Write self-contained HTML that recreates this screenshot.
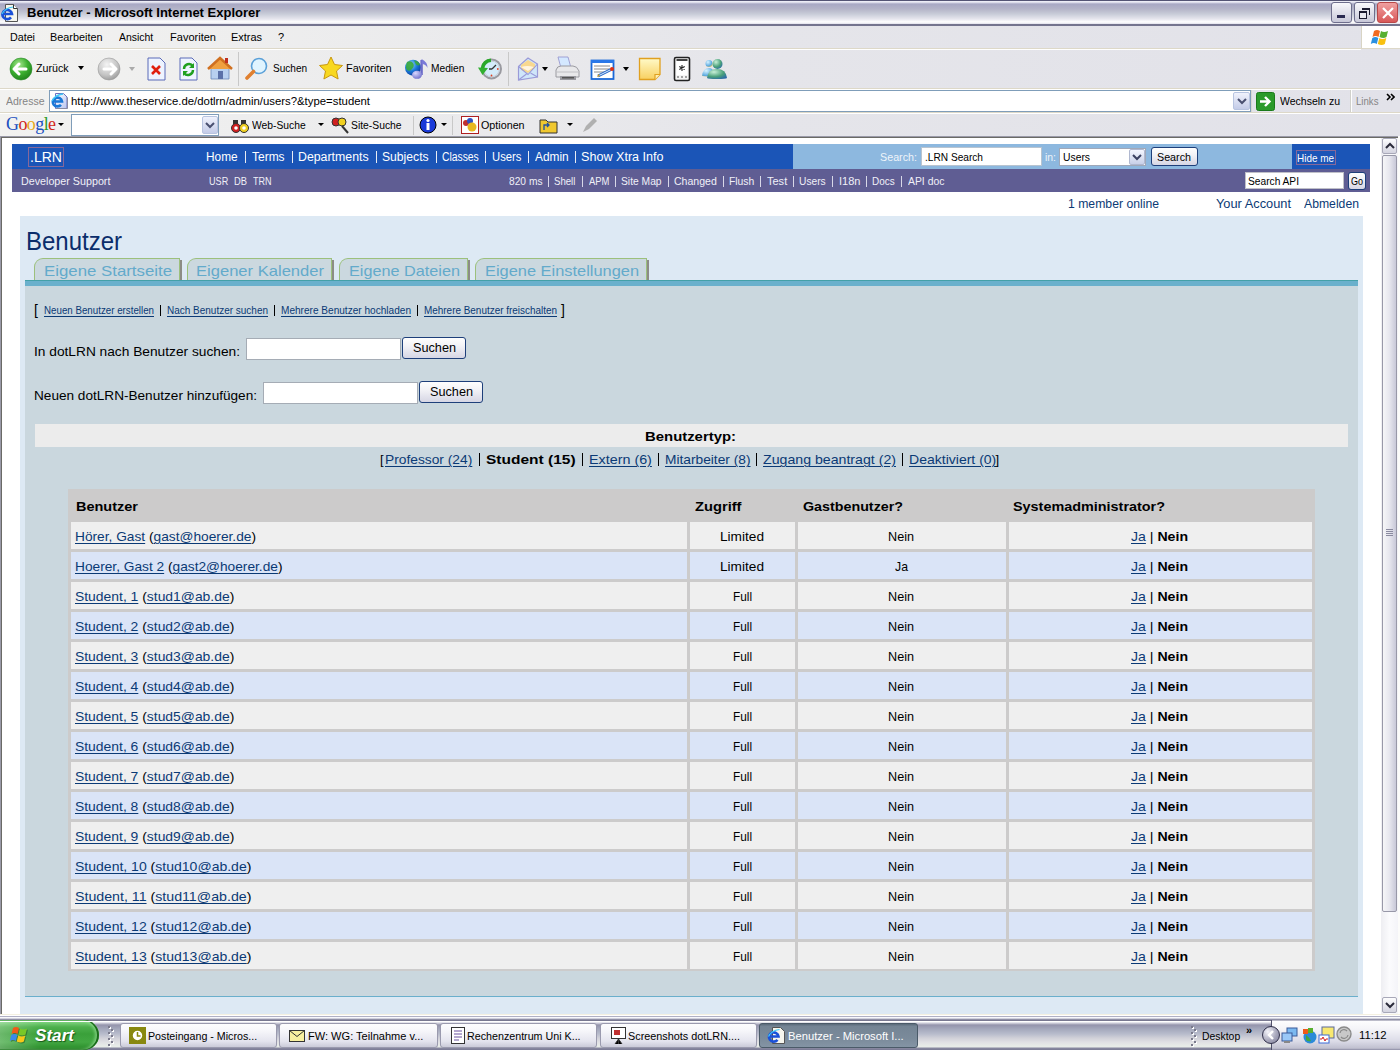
<!DOCTYPE html>
<html><head><meta charset="utf-8">
<style>
*{margin:0;padding:0;box-sizing:border-box}
html,body{width:1400px;height:1050px;overflow:hidden;background:#fff;font-family:"Liberation Sans",sans-serif;font-size:12px;color:#000}
.a{position:absolute;white-space:nowrap}
#title{left:0;top:0;width:1400px;height:26px;background:linear-gradient(#545474 0,#545474 1px,#ececf6 1px,#ececf6 2px,#a8a8c4 4px,#b4b4c8 9px,#c8ccd8 14px,#e6e6ee 19px,#fff 22px,#e8e8f0 23.5px,#74748e 24.5px,#74748e 26px)}
#menu{left:0;top:26px;width:1400px;height:23px;background:linear-gradient(90deg,#f2f2f0,#e5e5ea 55%,#e2e2e9);border-bottom:1px solid #ddd8c8;box-shadow:0 1px 0 #fff}
#tool{left:0;top:49px;width:1400px;height:40px;background:linear-gradient(90deg,#f2f2f0,#e5e5ea 55%,#e2e2e9);border-bottom:1px solid #ddd8c8;box-shadow:0 1px 0 #fff}
#addr{left:0;top:89px;width:1400px;height:24px;background:linear-gradient(90deg,#f2f2f0,#e5e5ea 55%,#e2e2e9);border-bottom:1px solid #ddd8c8;box-shadow:0 1px 0 #fff}
#goog{left:0;top:113px;width:1400px;height:24px;background:linear-gradient(90deg,#f2f2f0,#e5e5ea 55%,#e2e2e9)}
#page{left:0;top:136px;width:1400px;height:880px;background:#fff;border-top:2px solid #7a7a78;border-left:2px solid #7a7a78}
#task{left:0;top:1016px;width:1400px;height:34px;background:linear-gradient(#fff 0,#fff 1px,#a8a8c0 1px,#a8a8c0 2px,#fff 2px,#f8f8fa 4px,#e4e4ec 8px,#d2d2de 20px,#c0c0d0 30px,#a4a4b8 34px)}
.btn3{top:2px;width:21px;height:21px;border-radius:3px;border:1px solid #6e6e8c}
.mi{top:31px;font-size:11px;color:#000}
.tt{font-size:12px;color:#000}
</style></head><body>
<div id="title" class="a"></div>
<svg class="a" style="left:1px;top:3px" width="20" height="19"><path d="M4.5 1.5h8l4 4v13h-12z" fill="#f6f6ee" stroke="#555" stroke-width="1"/><path d="M12.5 1.5v4h4" fill="#fff" stroke="#333" stroke-width="1"/><path d="M2.5 11h8.5A4.8 4.6 0 1 0 10 14.4" stroke="#1a50d8" stroke-width="2.6" fill="none"/><path d="M1 11q3-6 11-7" stroke="#40c8f8" stroke-width="1.2" fill="none"/></svg>
<div class="a" style="left:27px;top:5px;font-size:13px;font-weight:bold;color:#000;">Benutzer - Microsoft Internet Explorer</div>
<div class="a btn3" style="left:1331px;background:linear-gradient(#f8f8fc,#c8c8d8)"><div class="a" style="left:5px;top:12px;width:8px;height:3px;background:#2a2a50"></div></div>
<div class="a btn3" style="left:1354px;background:linear-gradient(#f8f8fc,#c8c8d8)"><div class="a" style="left:4px;top:8px;width:8px;height:8px;border:1px solid #1a1a30;border-top-width:2px;background:#e8e8f0"></div><div class="a" style="left:7px;top:5px;width:8px;height:7px;border-top:2px solid #1a1a30;border-right:1px solid #1a1a30"></div></div>
<div class="a btn3" style="left:1377px;background:linear-gradient(#f0a0a0,#d85858);border-color:#b84848">
<svg class="a" style="left:3px;top:3px" width="14" height="14"><path d="M2 2L12 12M12 2L2 12" stroke="#fff" stroke-width="2.2"/></svg></div>

<div id="menu" class="a"></div>
<div class="a" style="left:1361px;top:26px;width:39px;height:22px;background:#fff;border-left:1px solid #d8d4c4"></div>
<svg class="a" style="left:1370px;top:27px" width="22" height="20"><path d="M4 4q3-2 6 0l-1.5 6q-3-2-6 0z" fill="#f06a20"/><path d="M11 4q3 2 7 0l-1.5 6q-3 2-7 0z" fill="#58b030"/><path d="M2.3 11q3-2 6 0l-1.5 6q-3-2-6 0z" fill="#2a90e0"/><path d="M9.3 11q3 2 7 0l-1.5 6q-3 2-7 0z" fill="#f8c010"/></svg>

<div id="tool" class="a"></div>
<svg class="a" style="left:9px;top:57px" width="24" height="24"><defs><radialGradient id="gb" cx=".4" cy=".3" r=".8"><stop offset="0" stop-color="#a8e890"/><stop offset=".5" stop-color="#3cb030"/><stop offset="1" stop-color="#1a7a18"/></radialGradient><radialGradient id="gg" cx=".4" cy=".3" r=".8"><stop offset="0" stop-color="#f4f4f4"/><stop offset=".6" stop-color="#c4c4c4"/><stop offset="1" stop-color="#909090"/></radialGradient></defs><circle cx="12" cy="12" r="11" fill="url(#gb)" stroke="#2a8a28" stroke-width=".6"/><path d="M5 12h12M5 12l5-5M5 12l5 5" stroke="#fff" stroke-width="3" fill="none" stroke-linecap="round" stroke-linejoin="round"/></svg>
<svg class="a" style="left:78px;top:66px" width="8" height="5"><path d="M0 0h6l-3 4z" fill="#000"/></svg>
<svg class="a" style="left:97px;top:57px" width="24" height="24"><circle cx="12" cy="12" r="11" fill="url(#gg)" stroke="#999" stroke-width=".6"/><path d="M19 12H7M19 12l-5-5M19 12l-5 5" stroke="#fff" stroke-width="3" fill="none" stroke-linecap="round" stroke-linejoin="round"/></svg>
<svg class="a" style="left:129px;top:67px" width="8" height="5"><path d="M0 0h6l-3 4z" fill="#aaa"/></svg>
<svg class="a" style="left:146px;top:57px" width="22" height="24"><path d="M2 1h12l5 5v17H2z" fill="#eef4ff" stroke="#5a6ab8" stroke-width="1"/><path d="M6 9l8 8M14 9l-8 8" stroke="#e02010" stroke-width="2.6"/></svg>
<svg class="a" style="left:178px;top:57px" width="22" height="24"><path d="M2 1h12l5 5v17H2z" fill="#eef4ff" stroke="#5a6ab8" stroke-width="1"/><path d="M6 12a5 5 0 0 1 9-3M15 13a5 5 0 0 1-9 3" stroke="#20a020" stroke-width="2.4" fill="none"/><path d="M16 6v5h-5z M5 19v-5h5z" fill="#20a020"/></svg>
<svg class="a" style="left:207px;top:56px" width="26" height="25"><path d="M4 12L13 3l9 9v11H4z" fill="#b8d0f0" stroke="#6a88b8" stroke-width=".8"/><path d="M1 13L13 2l12 11" fill="#f0a040" stroke="#d07020" stroke-width="2.5"/><rect x="11" y="15" width="5" height="8" fill="#5a70a8"/><rect x="18" y="2" width="3" height="5" fill="#c03020"/></svg>
<div class="a" style="left:238px;top:52px;width:1px;height:34px;background:#c8c8c8"></div>
<svg class="a" style="left:244px;top:56px" width="26" height="26"><circle cx="15" cy="10" r="7.5" fill="#e0f4ff" stroke="#5aa0d8" stroke-width="1.6"/><path d="M9.5 15.5L3 22" stroke="#e08030" stroke-width="3.6" stroke-linecap="round"/></svg>
<svg class="a" style="left:318px;top:56px" width="26" height="26"><path d="M13 1l3.5 7.5 8 1-6 5.5 1.6 8L13 19l-7.1 4 1.6-8-6-5.5 8-1z" fill="#f8d820" stroke="#c89810" stroke-width="1"/></svg>
<svg class="a" style="left:400px;top:56px" width="32" height="26"><defs><radialGradient id="glb" cx=".35" cy=".3" r=".75"><stop offset="0" stop-color="#9ae0ff"/><stop offset=".55" stop-color="#1a78d8"/><stop offset="1" stop-color="#0a3a9a"/></radialGradient><radialGradient id="nte" cx=".35" cy=".3" r=".8"><stop offset="0" stop-color="#d8d8ff"/><stop offset="1" stop-color="#6a6ac8"/></radialGradient></defs><circle cx="13" cy="11.7" r="8" fill="url(#glb)"/><path d="M7 6q4-2 6 1t-1 6q-2 3-5 1-2-3 0-8zM14 4.5q4 0 6 4-2 2-4 0z" fill="#3aa83a" opacity=".9"/><path d="M21.6 4v15" stroke="#6a6ac8" stroke-width="2.4"/><path d="M21.6 3q6 3 6 9-2-4-6-4z" fill="#7a7ad8"/><ellipse cx="17" cy="18.8" rx="5" ry="4" fill="url(#nte)"/></svg>
<svg class="a" style="left:478px;top:56px" width="26" height="26"><circle cx="13.5" cy="12.9" r="9.5" fill="#d4ecfa" stroke="#9a9aa0" stroke-width="2"/><circle cx="13.5" cy="12.9" r="7.8" fill="none" stroke="#c8c8d0" stroke-width=".8"/><path d="M14 13l4-4M14 13h-3" stroke="#333" stroke-width="1.3"/><circle cx="19.8" cy="13" r=".9" fill="#e04020"/><circle cx="13.5" cy="19.5" r=".9" fill="#e04020"/><path d="M13 4.2a9 9 0 0 0-8.5 8" stroke="#2aa82a" stroke-width="3.6" fill="none"/><path d="M0 11.5l4.5 7.5 5.5-7z" fill="#30b030"/></svg>
<div class="a" style="left:508px;top:52px;width:1px;height:34px;background:#c8c8c8"></div>
<svg class="a" style="left:516px;top:56px" width="24" height="26"><path d="M2.5 10.5L12 2l9.5 6v13l-19 3z" fill="#cfe6fa" stroke="#9a9ad8" stroke-width="1.2"/><path d="M5 9l7-5 7 4v4l-7 5-7-3z" fill="#f8d890"/><path d="M5 11q6-2 13 0l-6 4z" fill="#fff4e0"/><path d="M2.5 10.5l9.5 8 9.5-10.5M2.5 24l8-6M21.5 21l-7-4" stroke="#9a9ad8" stroke-width="1.1" fill="none"/></svg>
<svg class="a" style="left:542px;top:67px" width="8" height="5"><path d="M0 0h6l-3 4z" fill="#000"/></svg>
<svg class="a" style="left:555px;top:56px" width="26" height="26"><path d="M3 1h10l3 11H6z" fill="#d4e8ff" stroke="#9a9ad0" stroke-width=".9"/><path d="M1 14q1-4 5-4h12q4 0 6 5v6H1z" fill="#e8e8ea" stroke="#9a9aa0" stroke-width="1"/><path d="M1 16h23" stroke="#c0c0c4"/><rect x="5" y="20" width="16" height="4" fill="#9a9aa0"/><rect x="7" y="21" width="12" height="1.5" fill="#555"/></svg>
<svg class="a" style="left:590px;top:59px" width="26" height="22"><rect x="1.5" y="1.5" width="22" height="18.5" fill="#fff" stroke="#1a68d8" stroke-width="1.8"/><rect x="1" y="1" width="23" height="3" fill="#2a78e8"/><path d="M4 7h16M4 10h16M4 13h12" stroke="#8a8a8a" stroke-width="1"/><path d="M8 17l13-6.5" stroke="#2a68c8" stroke-width="3"/><path d="M8 17l13-6.5" stroke="#d8ecff" stroke-width="1"/><path d="M7 18l1.5-3 1.5 2z" fill="#c89820"/><circle cx="22" cy="10" r="2" fill="#e03010"/></svg>
<svg class="a" style="left:623px;top:67px" width="8" height="5"><path d="M0 0h6l-3 4z" fill="#000"/></svg>
<svg class="a" style="left:638px;top:57px" width="24" height="24"><defs><linearGradient id="ntg" x1="0" y1="0" x2="0" y2="1"><stop offset="0" stop-color="#fffac8"/><stop offset="1" stop-color="#f8d060"/></linearGradient></defs><path d="M1.5 1.5h20.5v16l-5 5H1.5z" fill="url(#ntg)" stroke="#e0a020" stroke-width="1.3"/><path d="M17 22.5v-5h5" fill="#fff0b0" stroke="#e0a020" stroke-width="1.2"/></svg>
<svg class="a" style="left:673px;top:56px" width="18" height="26"><rect x="1.5" y="1.5" width="15" height="23" rx="1.5" fill="#f4f4f4" stroke="#222" stroke-width="1.6"/><rect x="3.5" y="3" width="11" height="2" fill="#444"/><rect x="3.5" y="5" width="11" height="14" fill="#fff"/><path d="M9 9v6M6.3 10.5l5.4 3M11.7 10.5l-5.4 3" stroke="#222" stroke-width="1.1"/><path d="M4 21h2M8 21h2M12 21h2" stroke="#888" stroke-width="1.5"/></svg>
<svg class="a" style="left:700px;top:56px" width="28" height="26"><defs><radialGradient id="msh" cx=".35" cy=".3" r=".8"><stop offset="0" stop-color="#c8f0d8"/><stop offset=".6" stop-color="#4aa07a"/><stop offset="1" stop-color="#2a6aa8"/></radialGradient><radialGradient id="msb" cx=".35" cy=".3" r=".8"><stop offset="0" stop-color="#d8f4ff"/><stop offset=".7" stop-color="#5aa8e0"/><stop offset="1" stop-color="#e0c040"/></radialGradient></defs><circle cx="9" cy="7.5" r="3.5" fill="url(#msb)"/><path d="M2 20q1-8 7-8 4 0 5 5l-3 4z" fill="url(#msb)"/><circle cx="17.5" cy="8" r="5" fill="url(#msh)"/><path d="M7 22q1-9 10-9 9 0 10 9-1 1-10 1t-10-1z" fill="url(#msh)"/></svg>

<div id="addr" class="a"></div>
<div class="a" style="left:49px;top:90px;width:1202px;height:22px;background:#fff;border:1px solid #7f9db9"></div>
<svg class="a" style="left:51px;top:92px" width="18" height="18"><defs><linearGradient id="pgb" x1="0" y1="0" x2="1" y2="1"><stop offset="0" stop-color="#fff"/><stop offset="1" stop-color="#b8c4f0"/></linearGradient></defs><path d="M4.5 1.5h8l3.5 3.5v11.5H4.5z" fill="url(#pgb)" stroke="#6a70c0" stroke-width="1"/><path d="M5 16.5h11.5v-11" stroke="#8a8aa0" stroke-width="1" fill="none"/><path d="M2.5 9.5h8.5A4.6 4.4 0 1 0 10 12.8" stroke="#1a78d8" stroke-width="2.6" fill="none"/><path d="M1 9q3-6 11-7" stroke="#40c8f8" stroke-width="1.3" fill="none"/></svg>
<div class="a" style="left:1233px;top:92px;width:17px;height:18px;background:linear-gradient(#f0f2fc,#c4cce8);border:1px solid #b8c4e0;border-radius:2px"></div>
<svg class="a" style="left:1237px;top:98px" width="10" height="7"><path d="M1 1l4 4 4-4" stroke="#4a5070" stroke-width="2" fill="none"/></svg>
<div class="a" style="left:1251px;top:90px;width:1px;height:22px;background:#d8d8d0"></div>
<svg class="a" style="left:1256px;top:92px" width="19" height="19"><rect x=".5" y=".5" width="18" height="18" rx="2" fill="#2a9a2a" stroke="#1a7a1a"/><path d="M4 9.5h9M9 5l4.5 4.5L9 14" stroke="#fff" stroke-width="2.4" fill="none"/></svg>
<div class="a" style="left:1350px;top:90px;width:2px;height:22px;border-left:1px solid #d0d0cc;border-right:1px solid #fff"></div>

<div id="goog" class="a"></div>
<div class="a" style="left:6px;top:114px;font-family:'Liberation Serif',serif;font-size:18px;letter-spacing:-.6px"><span style="color:#2050c0">G</span><span style="color:#d02818">o</span><span style="color:#e8a818">o</span><span style="color:#2050c0">g</span><span style="color:#2a9a2a">l</span><span style="color:#d02818">e</span></div>
<svg class="a" style="left:58px;top:123px" width="7" height="5"><path d="M0 0h6l-3 3z" fill="#000"/></svg>
<div class="a" style="left:71px;top:114px;width:148px;height:22px;background:#fff;border:1px solid #7f9db9"></div>
<div class="a" style="left:202px;top:116px;width:16px;height:18px;background:linear-gradient(#f0f2fc,#c4cce8);border:1px solid #b8c4e0;border-radius:2px"></div>
<svg class="a" style="left:205px;top:122px" width="10" height="7"><path d="M1 1l4 4 4-4" stroke="#4a5070" stroke-width="2" fill="none"/></svg>
<svg class="a" style="left:230px;top:116px" width="20" height="18"><path d="M3 4h5v4H3zM11 4h5v4h-5z" fill="#333"/><circle cx="6" cy="12" r="4.5" fill="#d02020" stroke="#333"/><circle cx="14" cy="12" r="4.5" fill="#f0d020" stroke="#333"/><circle cx="6" cy="12" r="1.8" fill="#fff"/><circle cx="14" cy="12" r="1.8" fill="#fff"/></svg>
<svg class="a" style="left:318px;top:123px" width="7" height="5"><path d="M0 0h6l-3 3z" fill="#000"/></svg>
<svg class="a" style="left:331px;top:116px" width="19" height="18"><circle cx="5" cy="6" r="4" fill="#d02020" stroke="#333"/><circle cx="11" cy="6" r="4" fill="#f0d020" stroke="#333"/><path d="M11 10l6 7" stroke="#333" stroke-width="2"/></svg>
<div class="a" style="left:413px;top:116px;width:1px;height:19px;background:#c8c8c8"></div>
<svg class="a" style="left:419px;top:116px" width="19" height="18"><circle cx="9" cy="9" r="8" fill="#1a3ad8" stroke="#000" stroke-width="1"/><rect x="7.5" y="7" width="3" height="7" fill="#fff"/><circle cx="9" cy="4.5" r="1.6" fill="#fff"/></svg>
<svg class="a" style="left:441px;top:123px" width="7" height="5"><path d="M0 0h6l-3 3z" fill="#000"/></svg>
<div class="a" style="left:452px;top:116px;width:1px;height:19px;background:#c8c8c8"></div>
<svg class="a" style="left:461px;top:116px" width="18" height="18"><rect x=".5" y=".5" width="17" height="17" fill="#fff" stroke="#b02020"/><circle cx="5" cy="7" r="3" fill="#c03030"/><circle cx="9" cy="5" r="3" fill="#3050c0"/><circle cx="11" cy="11" r="4.5" fill="#e8b820"/></svg>
<svg class="a" style="left:539px;top:117px" width="19" height="17"><path d="M1 3h6l2 2h9v11H1z" fill="#f0c830" stroke="#333" stroke-width="1"/><path d="M5 13V8h5M8 6l2 2-2 2" stroke="#2050a0" stroke-width="1.3" fill="none"/></svg>
<svg class="a" style="left:567px;top:123px" width="7" height="5"><path d="M0 0h6l-3 3z" fill="#000"/></svg>
<svg class="a" style="left:581px;top:117px" width="17" height="17"><path d="M2 15l3-6 8-8 3 3-8 8z" fill="#b0b0b0"/></svg>

<style>
.t{position:absolute;white-space:nowrap;font-family:"Liberation Sans",sans-serif}
.lk{color:#0b3a75;text-decoration:underline;text-decoration-thickness:1px;text-underline-offset:2px}
.xb{position:absolute;border:1px solid #1e3f7a;border-radius:3px;background:linear-gradient(#fefefe,#f2f2f6 40%,#d6d6e4)}
.in{position:absolute;background:#fff;border:1px solid #a5acb5}
</style>
<div class="a" style="left:0px;top:49px;width:1361px;height:1px;background:#fff"></div>
<div class="a" style="left:0px;top:89px;width:1400px;height:1px;background:#fff"></div>
<div class="a" style="left:0px;top:113px;width:1400px;height:1px;background:#fff"></div>
<div class="t" style="left:9.5px;top:31px;font-size:11px;line-height:13px;color:#000;transform:scaleX(0.9732);transform-origin:0 0;">Datei</div>
<div class="t" style="left:50px;top:31px;font-size:11px;line-height:13px;color:#000;transform:scaleX(0.9865);transform-origin:0 0;">Bearbeiten</div>
<div class="t" style="left:118.75px;top:31px;font-size:11px;line-height:13px;color:#000;transform:scaleX(0.9493);transform-origin:0 0;">Ansicht</div>
<div class="t" style="left:169.5px;top:31px;font-size:11px;line-height:13px;color:#000;transform:scaleX(1.0031);transform-origin:0 0;">Favoriten</div>
<div class="t" style="left:231px;top:31px;font-size:11px;line-height:13px;color:#000;transform:scaleX(0.9940);transform-origin:0 0;">Extras</div>
<div class="t" style="left:278px;top:31px;font-size:11px;line-height:13px;color:#000;">?</div>
<div class="t" style="left:36.4px;top:62px;font-size:11px;line-height:13px;color:#000;transform:scaleX(0.9695);transform-origin:0 0;">Zurück</div>
<div class="t" style="left:272.9px;top:62px;font-size:11px;line-height:13px;color:#000;transform:scaleX(0.9139);transform-origin:0 0;">Suchen</div>
<div class="t" style="left:346.4px;top:62px;font-size:11px;line-height:13px;color:#000;transform:scaleX(0.9943);transform-origin:0 0;">Favoriten</div>
<div class="t" style="left:431.4px;top:62px;font-size:11px;line-height:13px;color:#000;transform:scaleX(0.9258);transform-origin:0 0;">Medien</div>
<div class="t" style="left:5.7px;top:95px;font-size:11px;line-height:13px;color:#858585;transform:scaleX(0.9564);transform-origin:0 0;">Adresse</div>
<div class="t" style="left:71px;top:95px;font-size:11px;line-height:13px;color:#000;transform:scaleX(1.0327);transform-origin:0 0;">http://www.theservice.de/dotlrn/admin/users?&amp;type=student</div>
<div class="t" style="left:1279.5px;top:95px;font-size:11px;line-height:13px;color:#000;transform:scaleX(0.9557);transform-origin:0 0;">Wechseln zu</div>
<div class="t" style="left:1355.5px;top:95px;font-size:11px;line-height:13px;color:#858585;transform:scaleX(0.8759);transform-origin:0 0;">Links</div>
<svg class="a" style="left:1386px;top:93px" width="9" height="8"><path d="M1 1l3 3-3 3M5 1l3 3-3 3" stroke="#000" stroke-width="1.6" fill="none"/></svg>
<div class="t" style="left:252px;top:119px;font-size:11px;line-height:13px;color:#000;transform:scaleX(0.9375);transform-origin:0 0;">Web-Suche</div>
<div class="t" style="left:351.4px;top:119px;font-size:11px;line-height:13px;color:#000;transform:scaleX(0.9403);transform-origin:0 0;">Site-Suche</div>
<div class="t" style="left:481.4px;top:119px;font-size:11px;line-height:13px;color:#000;transform:scaleX(0.9763);transform-origin:0 0;">Optionen</div>
<div class="a" style="left:0px;top:136px;width:1400px;height:880px;background:#fff"></div>
<div class="a" style="left:0px;top:136px;width:1400px;height:1px;background:#9a9aa8"></div>
<div class="a" style="left:0px;top:136px;width:1px;height:880px;background:#9a9aa8"></div>
<div class="a" style="left:1px;top:137px;width:1399px;height:1px;background:#6a6a66"></div>
<div class="a" style="left:1px;top:137px;width:1px;height:879px;background:#6a6a66"></div>
<div class="a" style="left:1398px;top:136px;width:2px;height:880px;background:#fcfcfa"></div>
<div class="a" style="left:1381px;top:138px;width:17px;height:877px;background:linear-gradient(90deg,#eeeef2,#fbfbfd 50%,#f4f4f8)"></div>
<div class="a" style="left:1382px;top:138px;width:15px;height:16px;border:1px solid #a8a8b8;border-radius:2px;background:linear-gradient(#fdfdfe,#d4d4e0)"></div>
<svg class="a" style="left:1385px;top:142px" width="10" height="7"><path d="M1 6l4-4 4 4" stroke="#2a2a3a" stroke-width="2" fill="none"/></svg>
<div class="a" style="left:1382px;top:155px;width:15px;height:757px;border:1px solid #9898a8;border-radius:2px;background:linear-gradient(90deg,#f6f6f8,#e6e6ee 50%,#c8c8d8)"></div>
<div class="a" style="left:1386px;top:529px;width:7px;height:8px;background:repeating-linear-gradient(#8a8aa0 0,#8a8aa0 1px,transparent 1px,transparent 2px)"></div>
<div class="a" style="left:1382px;top:997px;width:15px;height:16px;border:1px solid #a8a8b8;border-radius:2px;background:linear-gradient(#fdfdfe,#d4d4e0)"></div>
<svg class="a" style="left:1385px;top:1002px" width="10" height="7"><path d="M1 1l4 4 4-4" stroke="#2a2a3a" stroke-width="2" fill="none"/></svg>
<div class="a" style="left:12px;top:144px;width:1358px;height:25px;background:#1b55b7"></div>
<div class="a" style="left:793px;top:144px;width:499px;height:25px;background:#8db8df"></div>
<div class="a" style="left:12px;top:169px;width:1358px;height:23px;background:#5f5d93"></div>
<div class="a" style="left:28px;top:147px;width:36px;height:20px;border:1px solid #86689a"></div>
<div class="t" style="left:30px;top:148px;font-size:15px;line-height:17px;color:#fff;transform:scaleX(0.9360);transform-origin:0 0;">.LRN</div>
<div class="t" style="left:206.4px;top:150px;font-size:12px;line-height:14px;color:#fff;transform:scaleX(0.9870);transform-origin:0 0;">Home</div>
<div class="t" style="left:252.4px;top:150px;font-size:12px;line-height:14px;color:#fff;transform:scaleX(0.9978);transform-origin:0 0;">Terms</div>
<div class="t" style="left:298.4px;top:150px;font-size:12px;line-height:14px;color:#fff;transform:scaleX(1.0276);transform-origin:0 0;">Departments</div>
<div class="t" style="left:382.4px;top:150px;font-size:12px;line-height:14px;color:#fff;transform:scaleX(1.0124);transform-origin:0 0;">Subjects</div>
<div class="t" style="left:442.3px;top:150px;font-size:12px;line-height:14px;color:#fff;transform:scaleX(0.8621);transform-origin:0 0;">Classes</div>
<div class="t" style="left:492px;top:150px;font-size:12px;line-height:14px;color:#fff;transform:scaleX(0.9380);transform-origin:0 0;">Users</div>
<div class="t" style="left:534.9px;top:150px;font-size:12px;line-height:14px;color:#fff;transform:scaleX(0.9907);transform-origin:0 0;">Admin</div>
<div class="t" style="left:581.4px;top:150px;font-size:12px;line-height:14px;color:#fff;transform:scaleX(1.0493);transform-origin:0 0;">Show Xtra Info</div>
<div class="a" style="left:245px;top:151px;width:1px;height:12px;background:#e8ecf4"></div>
<div class="a" style="left:292px;top:151px;width:1px;height:12px;background:#e8ecf4"></div>
<div class="a" style="left:376px;top:151px;width:1px;height:12px;background:#e8ecf4"></div>
<div class="a" style="left:436px;top:151px;width:1px;height:12px;background:#e8ecf4"></div>
<div class="a" style="left:485px;top:151px;width:1px;height:12px;background:#e8ecf4"></div>
<div class="a" style="left:528px;top:151px;width:1px;height:12px;background:#e8ecf4"></div>
<div class="a" style="left:575px;top:151px;width:1px;height:12px;background:#e8ecf4"></div>
<div class="t" style="left:880px;top:151px;font-size:11px;line-height:13px;color:#eef4fa;transform:scaleX(0.9757);transform-origin:0 0;">Search:</div>
<div class="in" style="left:921px;top:147px;width:121px;height:19px;border-color:#b8c4d0"></div>
<div class="t" style="left:925px;top:151px;font-size:11px;line-height:13px;color:#000;transform:scaleX(0.9209);transform-origin:0 0;">.LRN Search</div>
<div class="t" style="left:1045px;top:151px;font-size:11px;line-height:13px;color:#eef4fa;transform:scaleX(0.9462);transform-origin:0 0;">in:</div>
<div class="in" style="left:1059px;top:148px;width:87px;height:18px;border-color:#a0a8b8"></div>
<div class="t" style="left:1063px;top:151px;font-size:11px;line-height:13px;color:#000;transform:scaleX(0.9396);transform-origin:0 0;">Users</div>
<div class="a" style="left:1129px;top:149px;width:16px;height:16px;border:1px solid #b0b8d0;border-radius:2px;background:linear-gradient(#f4f6fe,#c8d0e8)"></div>
<svg class="a" style="left:1132px;top:154px" width="10" height="7"><path d="M1 1l4 4 4-4" stroke="#3a4060" stroke-width="2" fill="none"/></svg>
<div class="xb" style="left:1151px;top:147px;width:47px;height:19px"></div>
<div class="t" style="left:1157px;top:151px;font-size:11px;line-height:13px;color:#000;transform:scaleX(0.9753);transform-origin:0 0;">Search</div>
<div class="a" style="left:1296px;top:150px;width:40px;height:15px;border:1px solid #86689a"></div>
<div class="t" style="left:1297px;top:152px;font-size:11px;line-height:13px;color:#fff;transform:scaleX(0.9031);transform-origin:0 0;">Hide me</div>
<div class="t" style="left:20.6px;top:175px;font-size:11px;line-height:13px;color:#f0f0f8;transform:scaleX(0.9746);transform-origin:0 0;">Developer Support</div>
<div class="t" style="left:209.4px;top:175px;font-size:11px;line-height:13px;color:#f0f0f8;transform:scaleX(0.8264);transform-origin:0 0;">USR</div>
<div class="t" style="left:234.4px;top:175px;font-size:11px;line-height:13px;color:#f0f0f8;transform:scaleX(0.8507);transform-origin:0 0;">DB</div>
<div class="t" style="left:253.4px;top:175px;font-size:11px;line-height:13px;color:#f0f0f8;transform:scaleX(0.8227);transform-origin:0 0;">TRN</div>
<div class="t" style="left:508.5px;top:175px;font-size:11px;line-height:13px;color:#f0f0f8;transform:scaleX(0.9285);transform-origin:0 0;">820 ms</div>
<div class="t" style="left:554.3px;top:175px;font-size:11px;line-height:13px;color:#f0f0f8;transform:scaleX(0.8746);transform-origin:0 0;">Shell</div>
<div class="t" style="left:588.6px;top:175px;font-size:11px;line-height:13px;color:#f0f0f8;transform:scaleX(0.8556);transform-origin:0 0;">APM</div>
<div class="t" style="left:621.4px;top:175px;font-size:11px;line-height:13px;color:#f0f0f8;transform:scaleX(0.9350);transform-origin:0 0;">Site Map</div>
<div class="t" style="left:674.3px;top:175px;font-size:11px;line-height:13px;color:#f0f0f8;transform:scaleX(0.9584);transform-origin:0 0;">Changed</div>
<div class="t" style="left:729px;top:175px;font-size:11px;line-height:13px;color:#f0f0f8;transform:scaleX(0.9403);transform-origin:0 0;">Flush</div>
<div class="t" style="left:766.9px;top:175px;font-size:11px;line-height:13px;color:#f0f0f8;transform:scaleX(1.0006);transform-origin:0 0;">Test</div>
<div class="t" style="left:799.3px;top:175px;font-size:11px;line-height:13px;color:#f0f0f8;transform:scaleX(0.9292);transform-origin:0 0;">Users</div>
<div class="t" style="left:838.6px;top:175px;font-size:11px;line-height:13px;color:#f0f0f8;transform:scaleX(0.9990);transform-origin:0 0;">I18n</div>
<div class="t" style="left:872.4px;top:175px;font-size:11px;line-height:13px;color:#f0f0f8;transform:scaleX(0.9017);transform-origin:0 0;">Docs</div>
<div class="t" style="left:907.9px;top:175px;font-size:11px;line-height:13px;color:#f0f0f8;transform:scaleX(0.9447);transform-origin:0 0;">API doc</div>
<div class="a" style="left:548px;top:176px;width:1px;height:11px;background:#d8d8e8"></div>
<div class="a" style="left:582px;top:176px;width:1px;height:11px;background:#d8d8e8"></div>
<div class="a" style="left:615px;top:176px;width:1px;height:11px;background:#d8d8e8"></div>
<div class="a" style="left:668px;top:176px;width:1px;height:11px;background:#d8d8e8"></div>
<div class="a" style="left:723px;top:176px;width:1px;height:11px;background:#d8d8e8"></div>
<div class="a" style="left:760px;top:176px;width:1px;height:11px;background:#d8d8e8"></div>
<div class="a" style="left:793px;top:176px;width:1px;height:11px;background:#d8d8e8"></div>
<div class="a" style="left:832px;top:176px;width:1px;height:11px;background:#d8d8e8"></div>
<div class="a" style="left:866px;top:176px;width:1px;height:11px;background:#d8d8e8"></div>
<div class="a" style="left:901px;top:176px;width:1px;height:11px;background:#d8d8e8"></div>
<div class="in" style="left:1245px;top:172px;width:99px;height:17px;border-color:#c0c0c8"></div>
<div class="t" style="left:1248px;top:176px;font-size:10px;line-height:12px;color:#000;transform:scaleX(1.0194);transform-origin:0 0;">Search API</div>
<div class="xb" style="left:1348px;top:172px;width:18px;height:18px;border-radius:3px"></div>
<div class="t" style="left:1351px;top:176px;font-size:10px;line-height:12px;color:#000;transform:scaleX(0.8993);transform-origin:0 0;">Go</div>
<div class="t" style="left:1068px;top:197px;font-size:12px;line-height:14px;color:#0b3a75;transform:scaleX(1.0180);transform-origin:0 0;">1 member online</div>
<div class="t" style="left:1216px;top:197px;font-size:12px;line-height:14px;color:#0b3a75;transform:scaleX(1.0671);transform-origin:0 0;">Your Account</div>
<div class="t" style="left:1304px;top:197px;font-size:12px;line-height:14px;color:#0b3a75;transform:scaleX(1.0176);transform-origin:0 0;">Abmelden</div>
<div class="a" style="left:20px;top:216px;width:1343px;height:799px;background:#dde9f4"></div>
<div class="t" style="left:26px;top:226px;font-size:26px;line-height:30px;color:#0a2d6b;transform:scaleX(0.9224);transform-origin:0 0;">Benutzer</div>
<div class="a" style="left:34px;top:258px;width:146px;height:22px;background:#cbd8df;border:1px solid #9cc07c;border-bottom:none;border-top-left-radius:9px"></div>
<div class="a" style="left:180px;top:260px;width:2px;height:22px;background:#8c8c86"></div>
<div class="t" style="left:44px;top:262px;font-size:15px;line-height:17px;color:#63aacb;transform:scaleX(1.1204);transform-origin:0 0;">Eigene Startseite</div>
<div class="a" style="left:187px;top:258px;width:145px;height:22px;background:#cbd8df;border:1px solid #9cc07c;border-bottom:none;border-top-left-radius:9px"></div>
<div class="a" style="left:332px;top:260px;width:2px;height:22px;background:#8c8c86"></div>
<div class="t" style="left:196px;top:262px;font-size:15px;line-height:17px;color:#63aacb;transform:scaleX(1.1042);transform-origin:0 0;">Eigener Kalender</div>
<div class="a" style="left:339px;top:258px;width:129px;height:22px;background:#cbd8df;border:1px solid #9cc07c;border-bottom:none;border-top-left-radius:9px"></div>
<div class="a" style="left:468px;top:260px;width:2px;height:22px;background:#8c8c86"></div>
<div class="t" style="left:349px;top:262px;font-size:15px;line-height:17px;color:#63aacb;transform:scaleX(1.0821);transform-origin:0 0;">Eigene Dateien</div>
<div class="a" style="left:475px;top:258px;width:172px;height:22px;background:#cbd8df;border:1px solid #9cc07c;border-bottom:none;border-top-left-radius:9px"></div>
<div class="a" style="left:647px;top:260px;width:2px;height:22px;background:#8c8c86"></div>
<div class="t" style="left:485px;top:262px;font-size:15px;line-height:17px;color:#63aacb;transform:scaleX(1.0926);transform-origin:0 0;">Eigene Einstellungen</div>
<div class="a" style="left:25px;top:280px;width:1333px;height:6px;background:linear-gradient(#44a0a8 0,#44a0a8 1px,#6ab0cc 1px)"></div>
<div class="a" style="left:25px;top:286px;width:1333px;height:710px;background:#cad7de"></div>
<div class="a" style="left:25px;top:996px;width:1333px;height:1px;background:#6aafcc"></div>
<div class="t" style="left:34px;top:302px;font-size:14px;line-height:16px;color:#000;font-weight:300">[</div>
<div class="t" style="left:44px;top:304px;font-size:11px;line-height:13px;color:#0b3a75;transform:scaleX(0.8861);transform-origin:0 0;"><span class="lk">Neuen Benutzer erstellen</span></div>
<div class="t" style="left:167px;top:304px;font-size:11px;line-height:13px;color:#0b3a75;transform:scaleX(0.9075);transform-origin:0 0;"><span class="lk">Nach Benutzer suchen</span></div>
<div class="t" style="left:281px;top:304px;font-size:11px;line-height:13px;color:#0b3a75;transform:scaleX(0.9163);transform-origin:0 0;"><span class="lk">Mehrere Benutzer hochladen</span></div>
<div class="t" style="left:424px;top:304px;font-size:11px;line-height:13px;color:#0b3a75;transform:scaleX(0.9026);transform-origin:0 0;"><span class="lk">Mehrere Benutzer freischalten</span></div>
<div class="a" style="left:160px;top:305px;width:1px;height:11px;background:#000"></div>
<div class="a" style="left:274px;top:305px;width:1px;height:11px;background:#000"></div>
<div class="a" style="left:417px;top:305px;width:1px;height:11px;background:#000"></div>
<div class="t" style="left:561px;top:302px;font-size:14px;line-height:16px;color:#000;">]</div>
<div class="t" style="left:34px;top:344px;font-size:13px;line-height:15px;color:#000;transform:scaleX(1.0557);transform-origin:0 0;">In dotLRN nach Benutzer suchen:</div>
<div class="in" style="left:246px;top:338px;width:155px;height:22px"></div>
<div class="xb" style="left:402px;top:337px;width:64px;height:22px"></div>
<div class="t" style="left:413px;top:341px;font-size:12px;line-height:14px;color:#000;transform:scaleX(1.0564);transform-origin:0 0;">Suchen</div>
<div class="t" style="left:34px;top:388px;font-size:13px;line-height:15px;color:#000;transform:scaleX(1.0460);transform-origin:0 0;">Neuen dotLRN-Benutzer hinzufügen:</div>
<div class="in" style="left:263px;top:382px;width:155px;height:22px"></div>
<div class="xb" style="left:419px;top:381px;width:64px;height:22px"></div>
<div class="t" style="left:430px;top:385px;font-size:12px;line-height:14px;color:#000;transform:scaleX(1.0564);transform-origin:0 0;">Suchen</div>
<div class="a" style="left:35px;top:424px;width:1313px;height:23px;background:#ececec"></div>
<div class="t" style="left:645px;top:429px;font-size:13px;line-height:15px;color:#000;font-weight:bold;transform:scaleX(1.1453);transform-origin:0 0;">Benutzertyp:</div>
<div class="t" style="left:380px;top:452px;font-size:13px;line-height:15px;color:#000;">[</div>
<div class="t" style="left:385.3px;top:452px;font-size:13px;line-height:15px;color:#000;transform:scaleX(1.0598);transform-origin:0 0;"><span class="lk">Professor (24)</span></div>
<div class="t" style="left:485.6px;top:452px;font-size:13px;line-height:15px;color:#000;transform:scaleX(1.1927);transform-origin:0 0;"><b>Student (15)</b></div>
<div class="t" style="left:588.9px;top:452px;font-size:13px;line-height:15px;color:#000;transform:scaleX(1.1020);transform-origin:0 0;"><span class="lk">Extern (6)</span></div>
<div class="t" style="left:664.5px;top:452px;font-size:13px;line-height:15px;color:#000;transform:scaleX(1.0566);transform-origin:0 0;"><span class="lk">Mitarbeiter (8)</span></div>
<div class="t" style="left:763px;top:452px;font-size:13px;line-height:15px;color:#000;transform:scaleX(1.0889);transform-origin:0 0;"><span class="lk">Zugang beantragt (2)</span></div>
<div class="t" style="left:908.5px;top:452px;font-size:13px;line-height:15px;color:#000;transform:scaleX(1.0788);transform-origin:0 0;"><span class="lk">Deaktiviert (0)</span></div>
<div class="a" style="left:479px;top:453px;width:1px;height:13px;background:#000"></div>
<div class="a" style="left:582px;top:453px;width:1px;height:13px;background:#000"></div>
<div class="a" style="left:658px;top:453px;width:1px;height:13px;background:#000"></div>
<div class="a" style="left:756px;top:453px;width:1px;height:13px;background:#000"></div>
<div class="a" style="left:902px;top:453px;width:1px;height:13px;background:#000"></div>
<div class="t" style="left:995.5px;top:452px;font-size:13px;line-height:15px;color:#000;">]</div>
<div class="a" style="left:68px;top:489px;width:1247px;height:482px;background:#cccbcb"></div>
<div class="t" style="left:75.5px;top:499px;font-size:13px;line-height:15px;color:#000;font-weight:bold;transform:scaleX(1.1146);transform-origin:0 0;">Benutzer</div>
<div class="t" style="left:694.5px;top:499px;font-size:13px;line-height:15px;color:#000;font-weight:bold;transform:scaleX(1.1298);transform-origin:0 0;">Zugriff</div>
<div class="t" style="left:802.6px;top:499px;font-size:13px;line-height:15px;color:#000;font-weight:bold;transform:scaleX(1.0987);transform-origin:0 0;">Gastbenutzer?</div>
<div class="t" style="left:1013px;top:499px;font-size:13px;line-height:15px;color:#000;font-weight:bold;transform:scaleX(1.1073);transform-origin:0 0;">Systemadministrator?</div>
<div class="a" style="left:71px;top:522px;width:616px;height:27px;background:#efefef"></div>
<div class="a" style="left:690px;top:522px;width:105px;height:27px;background:#efefef"></div>
<div class="a" style="left:798px;top:522px;width:208px;height:27px;background:#efefef"></div>
<div class="a" style="left:1009px;top:522px;width:303px;height:27px;background:#efefef"></div>
<div class="t" style="left:75px;top:529px;font-size:13px;line-height:15px;color:#000;transform:scaleX(1.0556);transform-origin:0 0;"><span class="lk">Hörer, Gast</span> (<span class="lk">gast@hoerer.de</span>)</div>
<div class="t" style="left:720.0px;top:529px;font-size:13px;line-height:15px;color:#000;transform:scaleX(1.0496);transform-origin:0 0;">Limited</div>
<div class="t" style="left:888.0px;top:529px;font-size:13px;line-height:15px;color:#000;transform:scaleX(0.9720);transform-origin:0 0;">Nein</div>
<div class="t" style="left:1131px;top:529px;font-size:13px;line-height:15px;color:#000;transform:scaleX(1.0854);transform-origin:0 0;"><span class="lk">Ja</span> | <b>Nein</b></div>
<div class="a" style="left:71px;top:552px;width:616px;height:27px;background:#dae4f7"></div>
<div class="a" style="left:690px;top:552px;width:105px;height:27px;background:#dae4f7"></div>
<div class="a" style="left:798px;top:552px;width:208px;height:27px;background:#dae4f7"></div>
<div class="a" style="left:1009px;top:552px;width:303px;height:27px;background:#dae4f7"></div>
<div class="t" style="left:75px;top:559px;font-size:13px;line-height:15px;color:#000;transform:scaleX(1.0545);transform-origin:0 0;"><span class="lk">Hoerer, Gast 2</span> (<span class="lk">gast2@hoerer.de</span>)</div>
<div class="t" style="left:720.0px;top:559px;font-size:13px;line-height:15px;color:#000;transform:scaleX(1.0496);transform-origin:0 0;">Limited</div>
<div class="t" style="left:894.5px;top:559px;font-size:13px;line-height:15px;color:#000;transform:scaleX(0.9465);transform-origin:0 0;">Ja</div>
<div class="t" style="left:1131px;top:559px;font-size:13px;line-height:15px;color:#000;transform:scaleX(1.0854);transform-origin:0 0;"><span class="lk">Ja</span> | <b>Nein</b></div>
<div class="a" style="left:71px;top:582px;width:616px;height:27px;background:#efefef"></div>
<div class="a" style="left:690px;top:582px;width:105px;height:27px;background:#efefef"></div>
<div class="a" style="left:798px;top:582px;width:208px;height:27px;background:#efefef"></div>
<div class="a" style="left:1009px;top:582px;width:303px;height:27px;background:#efefef"></div>
<div class="t" style="left:75px;top:589px;font-size:13px;line-height:15px;color:#000;transform:scaleX(1.0683);transform-origin:0 0;"><span class="lk">Student, 1</span> (<span class="lk">stud1@ab.de</span>)</div>
<div class="t" style="left:732.5px;top:589px;font-size:13px;line-height:15px;color:#000;transform:scaleX(0.9068);transform-origin:0 0;">Full</div>
<div class="t" style="left:888.0px;top:589px;font-size:13px;line-height:15px;color:#000;transform:scaleX(0.9720);transform-origin:0 0;">Nein</div>
<div class="t" style="left:1131px;top:589px;font-size:13px;line-height:15px;color:#000;transform:scaleX(1.0854);transform-origin:0 0;"><span class="lk">Ja</span> | <b>Nein</b></div>
<div class="a" style="left:71px;top:612px;width:616px;height:27px;background:#dae4f7"></div>
<div class="a" style="left:690px;top:612px;width:105px;height:27px;background:#dae4f7"></div>
<div class="a" style="left:798px;top:612px;width:208px;height:27px;background:#dae4f7"></div>
<div class="a" style="left:1009px;top:612px;width:303px;height:27px;background:#dae4f7"></div>
<div class="t" style="left:75px;top:619px;font-size:13px;line-height:15px;color:#000;transform:scaleX(1.0683);transform-origin:0 0;"><span class="lk">Student, 2</span> (<span class="lk">stud2@ab.de</span>)</div>
<div class="t" style="left:732.5px;top:619px;font-size:13px;line-height:15px;color:#000;transform:scaleX(0.9068);transform-origin:0 0;">Full</div>
<div class="t" style="left:888.0px;top:619px;font-size:13px;line-height:15px;color:#000;transform:scaleX(0.9720);transform-origin:0 0;">Nein</div>
<div class="t" style="left:1131px;top:619px;font-size:13px;line-height:15px;color:#000;transform:scaleX(1.0854);transform-origin:0 0;"><span class="lk">Ja</span> | <b>Nein</b></div>
<div class="a" style="left:71px;top:642px;width:616px;height:27px;background:#efefef"></div>
<div class="a" style="left:690px;top:642px;width:105px;height:27px;background:#efefef"></div>
<div class="a" style="left:798px;top:642px;width:208px;height:27px;background:#efefef"></div>
<div class="a" style="left:1009px;top:642px;width:303px;height:27px;background:#efefef"></div>
<div class="t" style="left:75px;top:649px;font-size:13px;line-height:15px;color:#000;transform:scaleX(1.0683);transform-origin:0 0;"><span class="lk">Student, 3</span> (<span class="lk">stud3@ab.de</span>)</div>
<div class="t" style="left:732.5px;top:649px;font-size:13px;line-height:15px;color:#000;transform:scaleX(0.9068);transform-origin:0 0;">Full</div>
<div class="t" style="left:888.0px;top:649px;font-size:13px;line-height:15px;color:#000;transform:scaleX(0.9720);transform-origin:0 0;">Nein</div>
<div class="t" style="left:1131px;top:649px;font-size:13px;line-height:15px;color:#000;transform:scaleX(1.0854);transform-origin:0 0;"><span class="lk">Ja</span> | <b>Nein</b></div>
<div class="a" style="left:71px;top:672px;width:616px;height:27px;background:#dae4f7"></div>
<div class="a" style="left:690px;top:672px;width:105px;height:27px;background:#dae4f7"></div>
<div class="a" style="left:798px;top:672px;width:208px;height:27px;background:#dae4f7"></div>
<div class="a" style="left:1009px;top:672px;width:303px;height:27px;background:#dae4f7"></div>
<div class="t" style="left:75px;top:679px;font-size:13px;line-height:15px;color:#000;transform:scaleX(1.0683);transform-origin:0 0;"><span class="lk">Student, 4</span> (<span class="lk">stud4@ab.de</span>)</div>
<div class="t" style="left:732.5px;top:679px;font-size:13px;line-height:15px;color:#000;transform:scaleX(0.9068);transform-origin:0 0;">Full</div>
<div class="t" style="left:888.0px;top:679px;font-size:13px;line-height:15px;color:#000;transform:scaleX(0.9720);transform-origin:0 0;">Nein</div>
<div class="t" style="left:1131px;top:679px;font-size:13px;line-height:15px;color:#000;transform:scaleX(1.0854);transform-origin:0 0;"><span class="lk">Ja</span> | <b>Nein</b></div>
<div class="a" style="left:71px;top:702px;width:616px;height:27px;background:#efefef"></div>
<div class="a" style="left:690px;top:702px;width:105px;height:27px;background:#efefef"></div>
<div class="a" style="left:798px;top:702px;width:208px;height:27px;background:#efefef"></div>
<div class="a" style="left:1009px;top:702px;width:303px;height:27px;background:#efefef"></div>
<div class="t" style="left:75px;top:709px;font-size:13px;line-height:15px;color:#000;transform:scaleX(1.0683);transform-origin:0 0;"><span class="lk">Student, 5</span> (<span class="lk">stud5@ab.de</span>)</div>
<div class="t" style="left:732.5px;top:709px;font-size:13px;line-height:15px;color:#000;transform:scaleX(0.9068);transform-origin:0 0;">Full</div>
<div class="t" style="left:888.0px;top:709px;font-size:13px;line-height:15px;color:#000;transform:scaleX(0.9720);transform-origin:0 0;">Nein</div>
<div class="t" style="left:1131px;top:709px;font-size:13px;line-height:15px;color:#000;transform:scaleX(1.0854);transform-origin:0 0;"><span class="lk">Ja</span> | <b>Nein</b></div>
<div class="a" style="left:71px;top:732px;width:616px;height:27px;background:#dae4f7"></div>
<div class="a" style="left:690px;top:732px;width:105px;height:27px;background:#dae4f7"></div>
<div class="a" style="left:798px;top:732px;width:208px;height:27px;background:#dae4f7"></div>
<div class="a" style="left:1009px;top:732px;width:303px;height:27px;background:#dae4f7"></div>
<div class="t" style="left:75px;top:739px;font-size:13px;line-height:15px;color:#000;transform:scaleX(1.0683);transform-origin:0 0;"><span class="lk">Student, 6</span> (<span class="lk">stud6@ab.de</span>)</div>
<div class="t" style="left:732.5px;top:739px;font-size:13px;line-height:15px;color:#000;transform:scaleX(0.9068);transform-origin:0 0;">Full</div>
<div class="t" style="left:888.0px;top:739px;font-size:13px;line-height:15px;color:#000;transform:scaleX(0.9720);transform-origin:0 0;">Nein</div>
<div class="t" style="left:1131px;top:739px;font-size:13px;line-height:15px;color:#000;transform:scaleX(1.0854);transform-origin:0 0;"><span class="lk">Ja</span> | <b>Nein</b></div>
<div class="a" style="left:71px;top:762px;width:616px;height:27px;background:#efefef"></div>
<div class="a" style="left:690px;top:762px;width:105px;height:27px;background:#efefef"></div>
<div class="a" style="left:798px;top:762px;width:208px;height:27px;background:#efefef"></div>
<div class="a" style="left:1009px;top:762px;width:303px;height:27px;background:#efefef"></div>
<div class="t" style="left:75px;top:769px;font-size:13px;line-height:15px;color:#000;transform:scaleX(1.0683);transform-origin:0 0;"><span class="lk">Student, 7</span> (<span class="lk">stud7@ab.de</span>)</div>
<div class="t" style="left:732.5px;top:769px;font-size:13px;line-height:15px;color:#000;transform:scaleX(0.9068);transform-origin:0 0;">Full</div>
<div class="t" style="left:888.0px;top:769px;font-size:13px;line-height:15px;color:#000;transform:scaleX(0.9720);transform-origin:0 0;">Nein</div>
<div class="t" style="left:1131px;top:769px;font-size:13px;line-height:15px;color:#000;transform:scaleX(1.0854);transform-origin:0 0;"><span class="lk">Ja</span> | <b>Nein</b></div>
<div class="a" style="left:71px;top:792px;width:616px;height:27px;background:#dae4f7"></div>
<div class="a" style="left:690px;top:792px;width:105px;height:27px;background:#dae4f7"></div>
<div class="a" style="left:798px;top:792px;width:208px;height:27px;background:#dae4f7"></div>
<div class="a" style="left:1009px;top:792px;width:303px;height:27px;background:#dae4f7"></div>
<div class="t" style="left:75px;top:799px;font-size:13px;line-height:15px;color:#000;transform:scaleX(1.0683);transform-origin:0 0;"><span class="lk">Student, 8</span> (<span class="lk">stud8@ab.de</span>)</div>
<div class="t" style="left:732.5px;top:799px;font-size:13px;line-height:15px;color:#000;transform:scaleX(0.9068);transform-origin:0 0;">Full</div>
<div class="t" style="left:888.0px;top:799px;font-size:13px;line-height:15px;color:#000;transform:scaleX(0.9720);transform-origin:0 0;">Nein</div>
<div class="t" style="left:1131px;top:799px;font-size:13px;line-height:15px;color:#000;transform:scaleX(1.0854);transform-origin:0 0;"><span class="lk">Ja</span> | <b>Nein</b></div>
<div class="a" style="left:71px;top:822px;width:616px;height:27px;background:#efefef"></div>
<div class="a" style="left:690px;top:822px;width:105px;height:27px;background:#efefef"></div>
<div class="a" style="left:798px;top:822px;width:208px;height:27px;background:#efefef"></div>
<div class="a" style="left:1009px;top:822px;width:303px;height:27px;background:#efefef"></div>
<div class="t" style="left:75px;top:829px;font-size:13px;line-height:15px;color:#000;transform:scaleX(1.0683);transform-origin:0 0;"><span class="lk">Student, 9</span> (<span class="lk">stud9@ab.de</span>)</div>
<div class="t" style="left:732.5px;top:829px;font-size:13px;line-height:15px;color:#000;transform:scaleX(0.9068);transform-origin:0 0;">Full</div>
<div class="t" style="left:888.0px;top:829px;font-size:13px;line-height:15px;color:#000;transform:scaleX(0.9720);transform-origin:0 0;">Nein</div>
<div class="t" style="left:1131px;top:829px;font-size:13px;line-height:15px;color:#000;transform:scaleX(1.0854);transform-origin:0 0;"><span class="lk">Ja</span> | <b>Nein</b></div>
<div class="a" style="left:71px;top:852px;width:616px;height:27px;background:#dae4f7"></div>
<div class="a" style="left:690px;top:852px;width:105px;height:27px;background:#dae4f7"></div>
<div class="a" style="left:798px;top:852px;width:208px;height:27px;background:#dae4f7"></div>
<div class="a" style="left:1009px;top:852px;width:303px;height:27px;background:#dae4f7"></div>
<div class="t" style="left:75px;top:859px;font-size:13px;line-height:15px;color:#000;transform:scaleX(1.0785);transform-origin:0 0;"><span class="lk">Student, 10</span> (<span class="lk">stud10@ab.de</span>)</div>
<div class="t" style="left:732.5px;top:859px;font-size:13px;line-height:15px;color:#000;transform:scaleX(0.9068);transform-origin:0 0;">Full</div>
<div class="t" style="left:888.0px;top:859px;font-size:13px;line-height:15px;color:#000;transform:scaleX(0.9720);transform-origin:0 0;">Nein</div>
<div class="t" style="left:1131px;top:859px;font-size:13px;line-height:15px;color:#000;transform:scaleX(1.0854);transform-origin:0 0;"><span class="lk">Ja</span> | <b>Nein</b></div>
<div class="a" style="left:71px;top:882px;width:616px;height:27px;background:#efefef"></div>
<div class="a" style="left:690px;top:882px;width:105px;height:27px;background:#efefef"></div>
<div class="a" style="left:798px;top:882px;width:208px;height:27px;background:#efefef"></div>
<div class="a" style="left:1009px;top:882px;width:303px;height:27px;background:#efefef"></div>
<div class="t" style="left:75px;top:889px;font-size:13px;line-height:15px;color:#000;transform:scaleX(1.0913);transform-origin:0 0;"><span class="lk">Student, 11</span> (<span class="lk">stud11@ab.de</span>)</div>
<div class="t" style="left:732.5px;top:889px;font-size:13px;line-height:15px;color:#000;transform:scaleX(0.9068);transform-origin:0 0;">Full</div>
<div class="t" style="left:888.0px;top:889px;font-size:13px;line-height:15px;color:#000;transform:scaleX(0.9720);transform-origin:0 0;">Nein</div>
<div class="t" style="left:1131px;top:889px;font-size:13px;line-height:15px;color:#000;transform:scaleX(1.0854);transform-origin:0 0;"><span class="lk">Ja</span> | <b>Nein</b></div>
<div class="a" style="left:71px;top:912px;width:616px;height:27px;background:#dae4f7"></div>
<div class="a" style="left:690px;top:912px;width:105px;height:27px;background:#dae4f7"></div>
<div class="a" style="left:798px;top:912px;width:208px;height:27px;background:#dae4f7"></div>
<div class="a" style="left:1009px;top:912px;width:303px;height:27px;background:#dae4f7"></div>
<div class="t" style="left:75px;top:919px;font-size:13px;line-height:15px;color:#000;transform:scaleX(1.0785);transform-origin:0 0;"><span class="lk">Student, 12</span> (<span class="lk">stud12@ab.de</span>)</div>
<div class="t" style="left:732.5px;top:919px;font-size:13px;line-height:15px;color:#000;transform:scaleX(0.9068);transform-origin:0 0;">Full</div>
<div class="t" style="left:888.0px;top:919px;font-size:13px;line-height:15px;color:#000;transform:scaleX(0.9720);transform-origin:0 0;">Nein</div>
<div class="t" style="left:1131px;top:919px;font-size:13px;line-height:15px;color:#000;transform:scaleX(1.0854);transform-origin:0 0;"><span class="lk">Ja</span> | <b>Nein</b></div>
<div class="a" style="left:71px;top:942px;width:616px;height:27px;background:#efefef"></div>
<div class="a" style="left:690px;top:942px;width:105px;height:27px;background:#efefef"></div>
<div class="a" style="left:798px;top:942px;width:208px;height:27px;background:#efefef"></div>
<div class="a" style="left:1009px;top:942px;width:303px;height:27px;background:#efefef"></div>
<div class="t" style="left:75px;top:949px;font-size:13px;line-height:15px;color:#000;transform:scaleX(1.0785);transform-origin:0 0;"><span class="lk">Student, 13</span> (<span class="lk">stud13@ab.de</span>)</div>
<div class="t" style="left:732.5px;top:949px;font-size:13px;line-height:15px;color:#000;transform:scaleX(0.9068);transform-origin:0 0;">Full</div>
<div class="t" style="left:888.0px;top:949px;font-size:13px;line-height:15px;color:#000;transform:scaleX(0.9720);transform-origin:0 0;">Nein</div>
<div class="t" style="left:1131px;top:949px;font-size:13px;line-height:15px;color:#000;transform:scaleX(1.0854);transform-origin:0 0;"><span class="lk">Ja</span> | <b>Nein</b></div>
<div class="a" style="left:0;top:1014px;width:1400px;height:36px;background:linear-gradient(#f4f0e0 0,#f4f0e0 1px,#fff 1px,#fff 2px,#b0b0c4 2px,#b0b0c4 3px,#f8f8fc 3px,#f8f8fc 4px,#a8a8bc 5px,#787890 6px,#787890 7px,#f4f4f8 7px,#f4f4f8 8px,#9494ac 11px,#a4a8bc 15px,#b8bccc 20px,#d0d0d8 24px,#e0e0e4 28px,#e8ece8 32px,#e8ece8 33px,#8a8aa2 34px,#7a7a94 36px)"></div>
<div class="a" style="left:0;top:1020px;width:99px;height:30px;border-radius:0 15px 15px 0/0 15px 15px 0;background:linear-gradient(#1e6e1e 0,#86d886 1px,#74cc74 3px,#4cb04c 7px,#3aa03a 14px,#42a842 22px,#2e902e 28px,#226e22 30px);box-shadow:inset -2px 0 0 #1a6a1a,inset -4px 0 3px rgba(160,230,160,.6)"></div>
<div class="a" style="left:0;top:1021px;width:40px;height:28px;background:linear-gradient(90deg,rgba(255,255,255,.25),rgba(255,255,255,0))"></div>
<svg class="a" style="left:9px;top:1025px" width="22" height="20"><g transform="translate(1,1)" fill="#1a4a1a" opacity=".45"><path d="M4 3q3-2 6 0l-1.5 6q-3-2-6 0z"/><path d="M11 3.5q3 2 7 0l-1.5 6q-3 2-7 0z"/><path d="M2.3 10q3-2 6 0l-1.5 6q-3-2-6 0z"/><path d="M9.3 10.5q3 2 7 0l-1.5 6q-3 2-7 0z"/></g><path d="M4 3q3-2 6 0l-1.5 6q-3-2-6 0z" fill="#f05a18"/><path d="M11 3.5q3 2 7 0l-1.5 6q-3 2-7 0z" fill="#78c828"/><path d="M2.3 10q3-2 6 0l-1.5 6q-3-2-6 0z" fill="#3a8ae8"/><path d="M9.3 10.5q3 2 7 0l-1.5 6q-3 2-7 0z" fill="#f8c818"/></svg>
<div class="t" style="left:35px;top:1026px;font-size:17px;line-height:20px;color:#fff;font-weight:bold;transform:scaleX(1.0069);transform-origin:0 0;font-style:italic;text-shadow:1px 1px 1px #185818">Start</div>
<svg class="a" style="left:108px;top:1026px" width="6" height="22"><rect x="1" y="1" width="2" height="2" fill="#fff"/><rect x="0" y="0" width="2" height="2" fill="#7a7a8c"/><rect x="4" y="4" width="2" height="2" fill="#fff"/><rect x="3" y="3" width="2" height="2" fill="#7a7a8c"/><rect x="1" y="7" width="2" height="2" fill="#fff"/><rect x="0" y="6" width="2" height="2" fill="#7a7a8c"/><rect x="4" y="10" width="2" height="2" fill="#fff"/><rect x="3" y="9" width="2" height="2" fill="#7a7a8c"/><rect x="1" y="13" width="2" height="2" fill="#fff"/><rect x="0" y="12" width="2" height="2" fill="#7a7a8c"/><rect x="4" y="16" width="2" height="2" fill="#fff"/><rect x="3" y="15" width="2" height="2" fill="#7a7a8c"/><rect x="1" y="19" width="2" height="2" fill="#fff"/><rect x="0" y="18" width="2" height="2" fill="#7a7a8c"/></svg>
<div class="a" style="left:120px;top:1023px;width:157px;height:25px;border-radius:3px;border:1px solid #9a9aae;background:linear-gradient(#fdfdfe,#f6f6fa 30%,#e4e4ee 75%,#cacad8)"></div>
<div class="t" style="left:147.8px;top:1030px;font-size:11px;line-height:13px;color:#000;transform:scaleX(0.9707);transform-origin:0 0;">Posteingang - Micros...</div>
<div class="a" style="left:279px;top:1023px;width:159px;height:25px;border-radius:3px;border:1px solid #9a9aae;background:linear-gradient(#fdfdfe,#f6f6fa 30%,#e4e4ee 75%,#cacad8)"></div>
<div class="t" style="left:307.6px;top:1030px;font-size:11px;line-height:13px;color:#000;transform:scaleX(1.0042);transform-origin:0 0;">FW: WG: Teilnahme v...</div>
<div class="a" style="left:440px;top:1023px;width:157px;height:25px;border-radius:3px;border:1px solid #9a9aae;background:linear-gradient(#fdfdfe,#f6f6fa 30%,#e4e4ee 75%,#cacad8)"></div>
<div class="t" style="left:467.2px;top:1030px;font-size:11px;line-height:13px;color:#000;transform:scaleX(0.9728);transform-origin:0 0;">Rechenzentrum Uni K...</div>
<div class="a" style="left:600px;top:1023px;width:157px;height:25px;border-radius:3px;border:1px solid #9a9aae;background:linear-gradient(#fdfdfe,#f6f6fa 30%,#e4e4ee 75%,#cacad8)"></div>
<div class="t" style="left:627.5px;top:1030px;font-size:11px;line-height:13px;color:#000;transform:scaleX(0.9848);transform-origin:0 0;">Screenshots dotLRN....</div>
<svg class="a" style="left:129px;top:1027px" width="17" height="17"><rect x="0" y="0" width="17" height="17" fill="#888810"/><circle cx="8.5" cy="8.5" r="5.5" fill="#fff" stroke="#888810" stroke-width="1.5"/><path d="M8.5 5v4h3" stroke="#888810" stroke-width="1.5" fill="none"/></svg>
<svg class="a" style="left:289px;top:1030px" width="16" height="12"><rect x=".5" y=".5" width="15" height="11" fill="#f8f0a0" stroke="#333"/><path d="M.5 .5l7.5 6 7.5-6" stroke="#333" fill="none"/></svg>
<svg class="a" style="left:451px;top:1027px" width="14" height="17"><rect x=".5" y=".5" width="13" height="16" fill="#fff" stroke="#333"/><path d="M3 4h8M3 7h8M3 10h8M3 13h5" stroke="#6a50a0"/></svg>
<svg class="a" style="left:611px;top:1027px" width="15" height="17"><rect x=".5" y=".5" width="14" height="11" fill="#fff" stroke="#333"/><rect x="3" y="3" width="6" height="5" fill="#c03030"/><path d="M7.5 12v5M4 17l3.5-5 3.5 5" stroke="#333"/></svg>
<div class="a" style="left:759px;top:1023px;width:159px;height:25px;border-radius:3px;border:1px solid #4a5a68;background:linear-gradient(#5a6a7a,#748494 10%,#7a8a9a 60%,#8494a4)"></div>
<svg class="a" style="left:767px;top:1026px" width="19" height="19"><path d="M5.5 1.5h8l4 4v12h-12z" fill="#f6f6ee" stroke="#555" stroke-width="1"/><path d="M3 10.5h8.5A4.8 4.6 0 1 0 10.5 13.9" stroke="#1a50d8" stroke-width="2.6" fill="none"/><path d="M1.5 10.5q3-6 11-7" stroke="#40c8f8" stroke-width="1.2" fill="none"/></svg>
<div class="t" style="left:788px;top:1030px;font-size:11px;line-height:13px;color:#fff;transform:scaleX(1.0176);transform-origin:0 0;">Benutzer - Microsoft I...</div>
<svg class="a" style="left:1191px;top:1026px" width="6" height="22"><rect x="1" y="1" width="2" height="2" fill="#fff"/><rect x="0" y="0" width="2" height="2" fill="#7a7a8c"/><rect x="4" y="4" width="2" height="2" fill="#fff"/><rect x="3" y="3" width="2" height="2" fill="#7a7a8c"/><rect x="1" y="7" width="2" height="2" fill="#fff"/><rect x="0" y="6" width="2" height="2" fill="#7a7a8c"/><rect x="4" y="10" width="2" height="2" fill="#fff"/><rect x="3" y="9" width="2" height="2" fill="#7a7a8c"/><rect x="1" y="13" width="2" height="2" fill="#fff"/><rect x="0" y="12" width="2" height="2" fill="#7a7a8c"/><rect x="4" y="16" width="2" height="2" fill="#fff"/><rect x="3" y="15" width="2" height="2" fill="#7a7a8c"/><rect x="1" y="19" width="2" height="2" fill="#fff"/><rect x="0" y="18" width="2" height="2" fill="#7a7a8c"/></svg>
<div class="t" style="left:1201.8px;top:1030px;font-size:11px;line-height:13px;color:#000;transform:scaleX(0.9465);transform-origin:0 0;">Desktop</div>
<div class="t" style="left:1246px;top:1024px;font-size:11px;line-height:13px;color:#000;font-weight:bold;">»</div>
<div class="a" style="left:1271px;top:1020px;width:129px;height:30px;border-left:1px solid #50506a;background:linear-gradient(#7a7a94 0,#fdfdfe 1px,#f4f4f8 30%,#dcdce8 70%,#c0c0d0 94%,#8a8aa2)"></div>
<div class="a" style="left:0px;top:1021px;width:1271px;height:1px;background:#fff"></div>
<div class="a" style="left:1262px;top:1026px;width:18px;height:18px;border-radius:50%;border:1px solid #30304a;background:radial-gradient(circle at 30% 30%,#f4f4fa,#a8a8bc 55%,#7a7a98)"></div>
<svg class="a" style="left:1265px;top:1029px" width="12" height="12"><path d="M8 2L4 6l4 4" stroke="#fff" stroke-width="2.4" fill="none"/></svg>
<svg class="a" style="left:1281px;top:1027px" width="18" height="17"><rect x="6" y="1" width="10" height="8" fill="#7ab8f0" stroke="#3a5a9a"/><rect x="1" y="6" width="10" height="8" fill="#9ac8f8" stroke="#3a5a9a"/><rect x="3" y="14" width="6" height="2" fill="#888"/></svg>
<svg class="a" style="left:1300px;top:1027px" width="18" height="17"><circle cx="10" cy="10" r="6.5" fill="#2a8ad8"/><path d="M3 2h5v5H3z" fill="#f05a18"/><path d="M8 1h5v5H8z" fill="#58b030"/><path d="M6 8q3 2 5 6-3 1-5-1z" fill="#40a840"/></svg>
<svg class="a" style="left:1318px;top:1026px" width="18" height="18"><rect x="4" y="1" width="12" height="11" fill="#f8e870" stroke="#5a6a9a"/><rect x="1" y="9" width="10" height="8" fill="#fff" stroke="#3a6ad8"/><path d="M2 13h2l1-2 2 4 1-2h2" stroke="#d02020" fill="none"/></svg>
<svg class="a" style="left:1336px;top:1026px" width="16" height="16"><circle cx="8" cy="8" r="7" fill="#c8c8c8" stroke="#8a8a8a" stroke-width="1.4"/><path d="M4 7a4 4 0 0 1 7-2M12 9a4 4 0 0 1-7 2" stroke="#8a8a8a" stroke-width="1.2" fill="none"/></svg>
<div class="t" style="left:1359px;top:1029px;font-size:11px;line-height:13px;color:#000;transform:scaleX(1.0292);transform-origin:0 0;">11:12</div>
</body></html>
